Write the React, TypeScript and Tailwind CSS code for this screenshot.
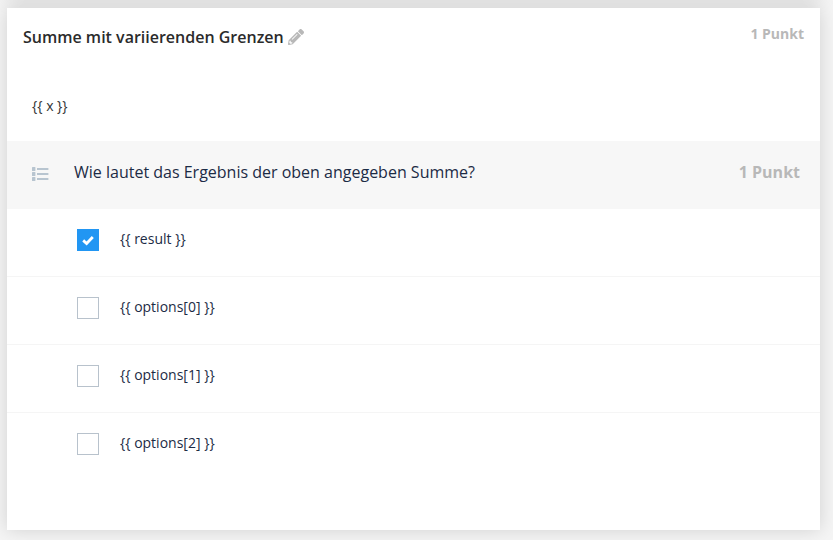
import { useState } from 'react';
import { FaPencilAlt } from 'react-icons/fa';

type Option = {
  id: string;
  label: string;
  correct: boolean;
};

const initialOptions: Option[] = [
  { id: 'result', label: '{{ result }}', correct: true },
  { id: 'option-0', label: '{{ options[0] }}', correct: false },
  { id: 'option-1', label: '{{ options[1] }}', correct: false },
  { id: 'option-2', label: '{{ options[2] }}', correct: false },
];

function ListIcon() {
  return (
    <svg viewBox="0 0 17 14" className="h-3.5 w-[17px] shrink-0 fill-[#b8c5d0]" aria-hidden="true">
      {[0, 5, 10].map((y) => (
        <g key={y}>
          <rect x="0" y={y} width="3.4" height="4" rx="0.5" />
          <rect x="5" y={y + 1} width="11.4" height="2" />
        </g>
      ))}
    </svg>
  );
}

function CheckIcon() {
  return (
    <svg
      viewBox="0 0 12 12"
      className="pointer-events-none invisible col-start-1 row-start-1 size-3 place-self-center fill-none stroke-white peer-checked:visible"
      aria-hidden="true"
    >
      <path d="M1.2 6.4 L4.6 9.5 L10.8 3" strokeWidth="2.8" />
    </svg>
  );
}

function OptionRow({ option, onToggle }: { option: Option; onToggle: () => void }) {
  return (
    <li className="border-b border-[#f5f5f5] last:border-b-0">
      <label className="flex h-[67px] cursor-pointer items-start pt-5 pl-[70px]">
        <span className="grid size-[22px] shrink-0">
          <input
            type="checkbox"
            checked={option.correct}
            onChange={onToggle}
            className="peer col-start-1 row-start-1 size-[22px] appearance-none border border-[#b8c2cc] bg-white checked:border-[#2196f3] checked:bg-[#2196f3]"
          />
          <CheckIcon />
        </span>
        <span className="pl-[21px] text-sm leading-5 text-[#1c2b45]">{option.label}</span>
      </label>
    </li>
  );
}

export default function App() {
  const [options, setOptions] = useState(initialOptions);

  const toggle = (id: string) => {
    setOptions((prev) =>
      prev.map((o) => (o.id === id ? { ...o, correct: !o.correct } : o))
    );
  };

  return (
    <main className="min-h-screen overflow-hidden bg-[#f5f5f5] pr-[13px] pb-2.5 pl-[7px] font-['Open_Sans','Noto_Sans',sans-serif]">
      {/* lower edge of the card above, only its shadow is visible */}
      <div className="-mt-10 h-10 bg-white shadow-[0_0_20px_rgba(0,0,0,0.1)]" />
      <section className="mt-2 bg-white pb-[50px] shadow-[0_0_18px_rgba(0,0,0,0.15)]">
        <header className="flex items-start justify-between pt-4 pr-4 pl-4">
          <div className="flex items-center gap-1 pt-px">
            <h1 className="text-base leading-6 font-semibold text-[#2b2b2b]">
              Summe mit variierenden Grenzen
            </h1>
            <button type="button" aria-label="Titel bearbeiten" className="cursor-pointer text-[#b8b8b8]">
              <FaPencilAlt className="size-4" />
            </button>
          </div>
          <span className="text-sm leading-5 font-bold text-[#b8b8b8]">1 Punkt</span>
        </header>

        <p className="px-[25px] pt-[47px] pb-[25px] text-sm leading-5 text-[#333333]">{'{{ x }}'}</p>

        <div className="flex h-[68px] items-start bg-[#f7f7f7] pt-[19px] pr-5 pl-[25px]">
          <div className="flex h-7 items-center">
            <ListIcon />
          </div>
          <h2 className="grow pl-[25px] text-base leading-6 text-[#1c2b45]">
            Wie lautet das Ergebnis der oben angegeben Summe?
          </h2>
          <span className="text-base leading-6 font-bold text-[#b8b8b8]">1 Punkt</span>
        </div>

        <ul>
          {options.map((option) => (
            <OptionRow key={option.id} option={option} onToggle={() => toggle(option.id)} />
          ))}
        </ul>
      </section>
    </main>
  );
}
